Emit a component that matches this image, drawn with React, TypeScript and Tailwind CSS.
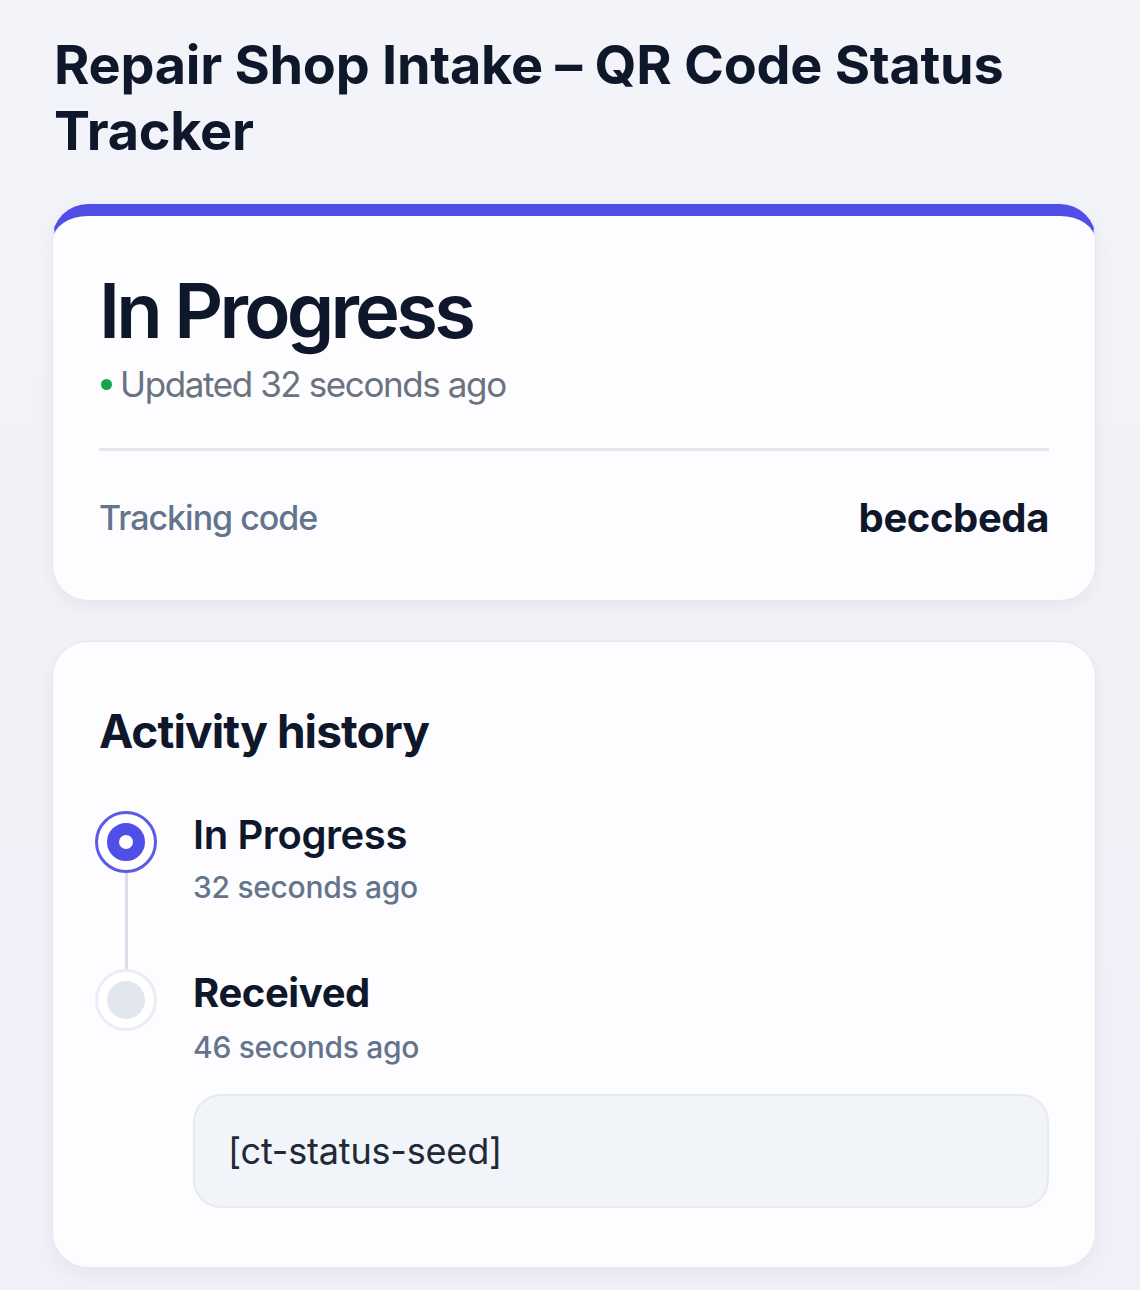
import React from "react";

export default function App() {
  const font = { fontFamily: "Inter, 'Noto Sans', sans-serif" };
  return (
    <div
      className="min-h-[1290px] w-full bg-gradient-to-b from-[#f3f4f9] to-[#f0f1f8] px-[52px] pt-[32px] pb-[24px]"
      style={font}
    >
      <h1 className="ml-[2px] text-[54px] leading-[66px] font-bold tracking-[-0.005em] text-[#0f172a]">
        Repair Shop Intake – QR Code Status Tracker
      </h1>

      <div className="mt-[40px] w-[1044px] overflow-hidden rounded-[36px] border border-[#e6e8f0] border-t-[12px] border-t-[#4f4ee6] bg-[#fdfdff] shadow-[0_6px_18px_rgba(15,23,42,0.05)]">
        <div className="px-[46px] pt-[50px] pb-[58px]">
          <div className="text-[76px] leading-[88px] font-semibold tracking-[-0.05em] text-[#0f172a]">
            In Progress
          </div>
          <div className="mt-[6px] flex items-center gap-[8px]">
            <span className="ml-[2px] h-[11px] w-[11px] rounded-full bg-[#16a34a]" />
            <span className="text-[35px] leading-[48px] tracking-[-0.04em] text-[#6b7280]">
              Updated 32 seconds ago
            </span>
          </div>
          <div className="mt-[40px] h-[3px] w-full bg-[#e5e7eb]" />
          <div className="mt-[43px] flex items-center justify-between">
            <span className="text-[34px] leading-[48px] font-medium tracking-[-0.03em] text-[#64748b]">
              Tracking code
            </span>
            <span className="text-[40px] leading-[48px] font-bold tracking-[-0.01em] text-[#0f172a]">
              beccbeda
            </span>
          </div>
        </div>
      </div>

      <div className="mt-[40px] w-[1044px] rounded-[36px] border border-[#e6e8f0] bg-[#fdfdff] px-[46px] pt-[61px] pb-[59px] shadow-[0_6px_18px_rgba(15,23,42,0.05)]">
        <h2 className="text-[46px] leading-[56px] font-bold tracking-[-0.02em] text-[#0f172a]">
          Activity history
        </h2>

        <div className="-ml-[4px] mt-[52px] flex">
          <div className="flex w-[62px] flex-col items-center">
            <div className="flex h-[62px] w-[62px] items-center justify-center rounded-full border-[3px] border-[#5b5be8] bg-white">
              <div className="h-[38px] w-[38px] rounded-full border-[12px] border-[#4f4ee6] bg-white" />
            </div>
            <div className="h-[96px] w-[3px] bg-[#d9dde7]" />
          </div>
          <div className="ml-[36px]">
            <div className="-mt-[2px] text-[40px] leading-[52px] font-semibold tracking-[-0.01em] text-[#0f172a]">
              In Progress
            </div>
            <div className="mt-[4px] text-[30px] leading-[44px] font-medium tracking-[-0.01em] text-[#64748b]">
              32 seconds ago
            </div>
          </div>
        </div>

        <div className="-ml-[4px] flex">
          <div className="flex w-[62px] flex-col items-center">
            <div className="flex h-[62px] w-[62px] items-center justify-center rounded-full border-[3px] border-[#eceef4] bg-white">
              <div className="h-[38px] w-[38px] rounded-full bg-[#e2e6ee]" />
            </div>
          </div>
          <div className="ml-[36px] flex-1">
            <div className="-mt-[2px] text-[40px] leading-[52px] font-bold tracking-[-0.01em] text-[#0f172a]">
              Received
            </div>
            <div className="mt-[6px] text-[30px] leading-[44px] font-medium tracking-[-0.01em] text-[#64748b]">
              46 seconds ago
            </div>
            <div className="mt-[25px] rounded-[28px] border-[2px] border-[#e6e9f0] bg-[#f1f4f9] px-[33px] py-[33px]">
              <span className="text-[36px] leading-[44px] tracking-[-0.005em] text-[#1f2937]">
                [ct-status-seed]
              </span>
            </div>
          </div>
        </div>
      </div>
    </div>
  );
}
